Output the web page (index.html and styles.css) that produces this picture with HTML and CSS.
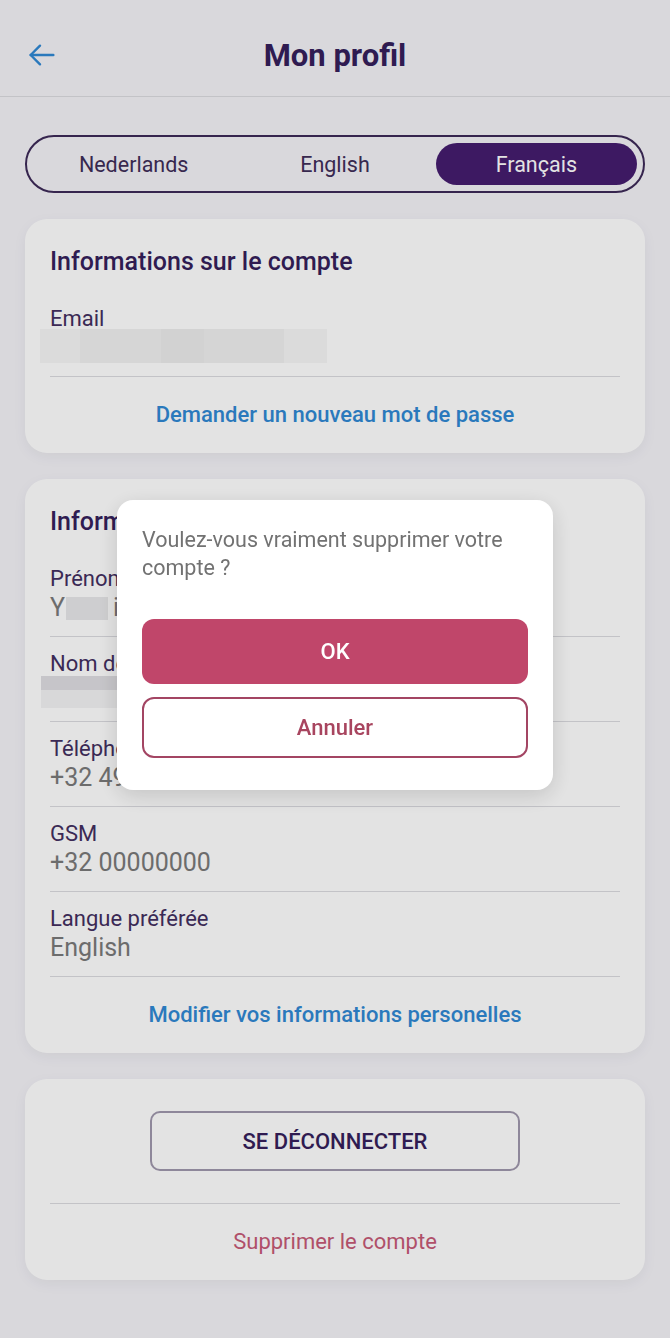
FILE: index.html
```html
<!DOCTYPE html>
<html lang="fr">
<head>
  <meta charset="UTF-8" />
  <title>Mon profil</title>
  <link rel="stylesheet" href="styles.css">
</head>
<body>
  <header class="topbar">
    <button class="back" aria-label="Retour">
      <svg width="32" height="32" viewBox="0 0 24 24" fill="none" stroke="currentColor" stroke-width="1.8" stroke-linecap="round" stroke-linejoin="round">
        <path d="M20.5 12H3.5" />
        <path d="M10.5 5L3.5 12L10.5 19" />
      </svg>
    </button>
    <h1>Mon profil</h1>
  </header>

  <main class="content">
    <div class="lang-switch">
      <span class="lang">Nederlands</span>
      <span class="lang">English</span>
      <span class="lang active">Français</span>
    </div>

    <section class="card">
      <h2>Informations sur le compte</h2>
      <div class="field">
        <div class="label">Email</div>
        <div class="value"><span class="redact redact-email"></span></div>
      </div>
      <a class="link">Demander un nouveau mot de passe</a>
    </section>

    <section class="card">
      <h2>Informations personnelles</h2>
      <div class="field">
        <div class="label">Prénom</div>
        <div class="value">Y<span class="redact redact-short"></span>i</div>
      </div>
      <div class="field">
        <div class="label">Nom de famille</div>
        <div class="value"><span class="redact redact-name"></span></div>
      </div>
      <div class="field">
        <div class="label">Téléphone</div>
        <div class="value">+32 490000000</div>
      </div>
      <div class="field">
        <div class="label">GSM</div>
        <div class="value">+32 00000000</div>
      </div>
      <div class="field">
        <div class="label">Langue préférée</div>
        <div class="value">English</div>
      </div>
      <a class="link">Modifier vos informations personelles</a>
    </section>

    <section class="card card-actions">
      <button class="logout">Se déconnecter</button>
      <a class="link link-danger">Supprimer le compte</a>
    </section>
  </main>

  <div class="overlay">
    <div class="dialog">
      <p>Voulez-vous vraiment supprimer votre compte ?</p>
      <button class="btn-ok">OK</button>
      <button class="btn-cancel">Annuler</button>
    </div>
  </div>
</body>
</html>
```

FILE: styles.css
```css
:root {
  --page-bg: #f4f3f8;
  --ink: #351f5b;
  --label: #432f60;
  --value: #7a7a7a;
  --divider: #dbdbe0;
  --blue: #3088d4;
  --purple: #451d6f;
  --rose: #c0466a;
  --rose-dark: #a34563;
}

* {
  box-sizing: border-box;
}

body {
  margin: 0;
  font-family: Roboto, "Noto Sans", sans-serif;
  background: var(--page-bg);
  color: var(--ink);
}

.topbar {
  display: grid;
  grid-template-columns: 70px 1fr 70px;
  align-items: center;
  height: 97px;
  padding-top: 14px;
  border-bottom: 1px solid #dcdbe0;
}

.back {
  border: none;
  background: none;
  padding: 0;
  margin-left: 26px;
  color: #3088d4;
  display: flex;
  cursor: pointer;
}

.topbar h1 {
  margin: 0;
  text-align: center;
  font-size: 31px;
  font-weight: 700;
  color: var(--ink);
}

.content {
  padding: 38px 25px 60px;
  display: flex;
  flex-direction: column;
  gap: 26px;
}

.lang-switch {
  display: grid;
  grid-template-columns: repeat(3, 1fr);
  height: 58px;
  padding: 6px;
  border: 2px solid #3d2a58;
  border-radius: 29px;
}

.lang {
  display: flex;
  align-items: center;
  justify-content: center;
  border-radius: 22px;
  font-size: 21.5px;
  color: #3e2d58;
}

.lang.active {
  background: var(--purple);
  color: #fff;
}

.card {
  background: #fff;
  border-radius: 22px;
  padding: 28px 25px 0;
  box-shadow: 0 4px 14px rgba(0, 0, 0, 0.05);
}

.card h2 {
  margin: 0 0 15px;
  font-size: 25px;
  line-height: 30px;
  font-weight: 500;
  color: var(--ink);
}

.field {
  padding: 13px 0;
  border-bottom: 1px solid var(--divider);
}

.label {
  font-size: 22px;
  line-height: 28px;
  color: var(--label);
}

.value {
  height: 30px;
  font-size: 25px;
  line-height: 30px;
  color: var(--value);
  display: flex;
  align-items: center;
}

.redact {
  display: inline-block;
  flex-shrink: 0;
}

.redact-email {
  width: 287px;
  height: 34px;
  margin: -4px 0 0 -10px;
  background: linear-gradient(to right, #f6f6f6 0 14%, #f1f1f1 14% 42%, #ececec 42% 57%, #f0f0f0 57% 85%, #f6f6f6 85%);
}

.redact-short {
  width: 42px;
  height: 23px;
  margin: 0 5px 0 1px;
  background: #e8e8ea;
}

.redact-name {
  width: 86px;
  height: 32px;
  margin: -2px 0 0 -9px;
  background: linear-gradient(to bottom, #dfdee2 0 45%, #f3f3f4 45%);
}

.link {
  display: block;
  padding: 24px 0;
  text-align: center;
  font-size: 22px;
  line-height: 28px;
  font-weight: 500;
  color: var(--blue);
  cursor: pointer;
}

.link-danger {
  color: #c65a77;
  font-weight: 400;
}

.card-actions {
  padding-top: 32px;
  display: flex;
  flex-direction: column;
  align-items: stretch;
}

.logout {
  align-self: center;
  width: 370px;
  height: 60px;
  margin-bottom: 32px;
  border: 2px solid #a098ad;
  border-radius: 10px;
  background: #fff;
  font-family: inherit;
  font-size: 22px;
  font-weight: 500;
  text-transform: uppercase;
  color: var(--ink);
}

.card-actions .link {
  border-top: 1px solid var(--divider);
}

.overlay {
  position: fixed;
  inset: 0;
  background: rgba(0, 0, 0, 0.11);
  display: flex;
  justify-content: center;
  align-items: flex-start;
  padding-top: 500px;
}

.dialog {
  width: 436px;
  background: #fff;
  border-radius: 16px;
  padding: 26px 25px 32px;
  box-shadow: 0 6px 22px rgba(0, 0, 0, 0.14);
  display: flex;
  flex-direction: column;
}

.dialog p {
  margin: 0 0 37px;
  font-size: 21.5px;
  line-height: 28px;
  color: #727272;
}

.dialog button {
  font-family: inherit;
  font-size: 22px;
  font-weight: 500;
  border-radius: 12px;
  cursor: pointer;
}

.btn-ok {
  height: 65px;
  border: none;
  background: var(--rose);
  color: #fff;
}

.btn-cancel {
  height: 61px;
  margin-top: 13px;
  border: 2px solid var(--rose-dark);
  background: #fff;
  color: #a8455f;
}
```
